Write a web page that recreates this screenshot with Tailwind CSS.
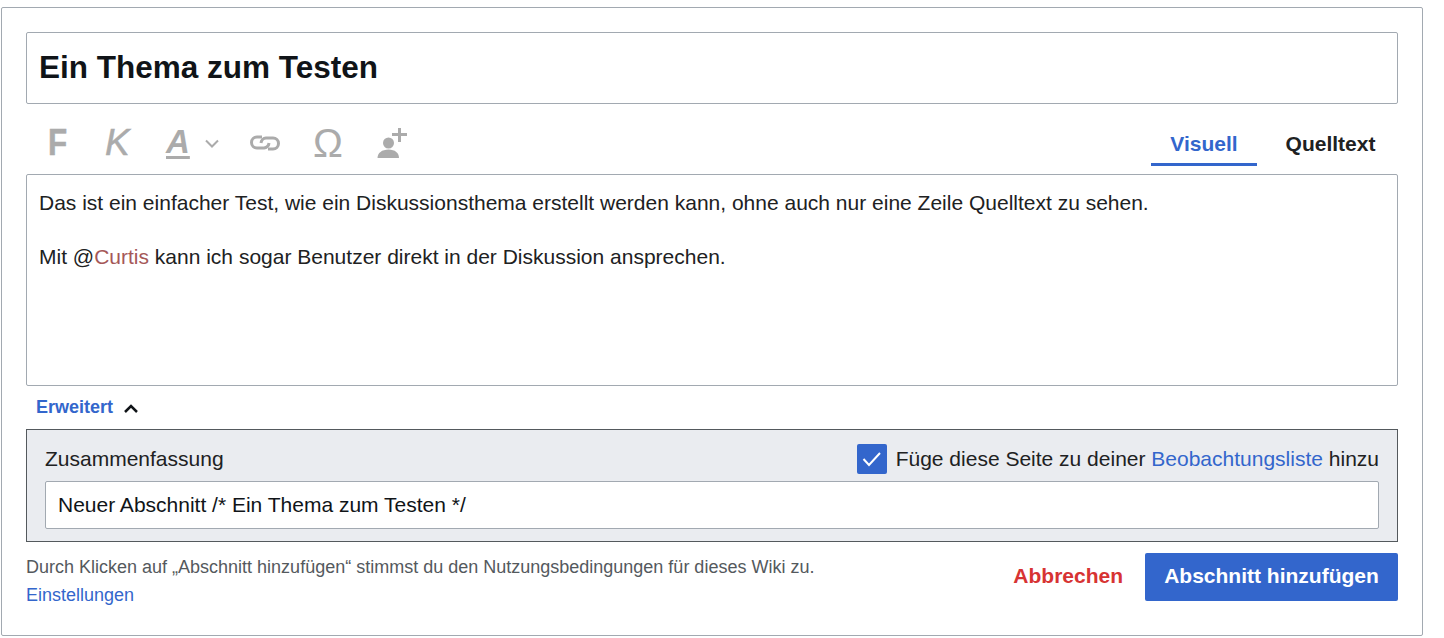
<!DOCTYPE html>
<html lang="de">
<head>
  <meta charset="UTF-8" />
  <title>Abschnitt hinzufügen</title>
  <script src="https://cdn.jsdelivr.net/npm/@tailwindcss/browser@4"></script>
</head>
<body class="bg-white h-screen overflow-hidden font-['Liberation_Sans',Arial,sans-serif] text-[#202122]">

  <!-- Card -->
  <div class="mt-[7px] ml-[1px] w-[1422px] h-[629px] border border-[#a2a9b1] rounded-[2px] px-[24px] pt-[24px] flex flex-col">

    <!-- Title -->
    <div class="h-[72px] shrink-0 border border-[#a2a9b1] rounded-[2px] flex items-center px-[12px] text-[31.5px] font-bold text-[#101418]">Ein Thema zum Testen</div>

    <!-- Toolbar -->
    <div class="h-[70px] shrink-0 flex justify-between">
      <div class="relative flex-1 text-[#ababab]">
        <span class="absolute left-[22px] top-[17px] text-[37px] leading-[44px] font-bold origin-left scale-x-[0.85] [-webkit-text-stroke:0.5px_#ababab]">F</span>
        <span class="absolute left-[79px] top-[17px] text-[37px] leading-[44px] italic font-normal [-webkit-text-stroke:0.5px_#ababab]">K</span>
        <span class="absolute left-[140px] top-[18px] text-[33px] leading-[40px] font-bold italic underline decoration-[3px] underline-offset-[3px]">A</span>
        <svg class="absolute left-[178px] top-[34px]" width="16" height="12" viewBox="0 0 16 12" fill="none" stroke="#ababab" stroke-width="2"><path d="M2 2.500l6 6 6-6"/></svg>
        <svg class="absolute left-[222px] top-[28px]" width="34" height="22" viewBox="0 0 34 22" fill="none" stroke="#ababab" stroke-width="3"><path d="M14 5H9a5.500 5.500 0 0 0 0 11h7a5.500 5.500 0 0 0 5-5"/><path d="M20 17h5a5.500 5.500 0 0 0 0-11h-7a5.500 5.500 0 0 0-5 5"/></svg>
        <span class="absolute left-[287px] top-[15px] text-[40px] leading-[48px]">Ω</span>
        <svg class="absolute left-[349px] top-[23px]" width="34" height="34" viewBox="0 0 34 34" fill="#ababab"><circle cx="13.500" cy="16" r="5.500"/><path d="M2.500 31c0-5 4.500-8.500 11-8.500s10.500 3.500 10.500 8.500z"/><path d="M17 6h6V1h3v5h6v3h-6v6h-3V9h-6z"/></svg>
      </div>
      <div class="flex h-[62px] text-[21px] font-bold">
        <div class="w-[106px] h-full flex items-center justify-center text-[#3366cc] border-b-[3px] border-[#3366cc] pt-[20px]">Visuell</div>
        <div class="w-[141px] h-full flex items-center justify-center pl-[6px] text-[#202122] pt-[21px] pb-[3px]">Quelltext</div>
      </div>
    </div>

    <!-- Editor -->
    <div class="h-[212px] shrink-0 border border-[#a2a9b1] rounded-[2px] px-[12px] pt-[14px] text-[21px] leading-[27px]">
      <p class="mb-[27px]">Das ist ein einfacher Test, wie ein Diskussionsthema erstellt werden kann, ohne auch nur eine Zeile Quelltext zu sehen.</p>
      <p>Mit @<span class="text-[#a55858]">Curtis</span> kann ich sogar Benutzer direkt in der Diskussion ansprechen.</p>
    </div>

    <!-- Advanced toggle -->
    <div class="h-[43px] shrink-0 flex items-center pl-[10px] gap-[10px]">
      <span class="text-[#3366cc] text-[18px] font-bold">Erweitert</span>
      <svg width="16" height="12" viewBox="0 0 16 12" fill="none" stroke="#101418" stroke-width="2.500"><path d="M2 10l6-6 6 6"/></svg>
    </div>

    <!-- Summary -->
    <div class="h-[113px] shrink-0 border border-[#54595d] bg-[#eaecf0] px-[18px] pt-[14px]">
      <div class="h-[30px] flex justify-between items-center text-[21px]">
        <span>Zusammenfassung</span>
        <div class="flex items-center gap-[9px]">
          <div class="w-[30px] h-[30px] rounded-[2px] bg-[#3366cc] flex items-center justify-center">
            <svg width="20" height="16" viewBox="0 0 20 16" fill="none" stroke="#fff" stroke-width="2"><path d="M1.500 8l5.500 6L18 2"/></svg>
          </div>
          <span>Füge diese Seite zu deiner <span class="text-[#3366cc]">Beobachtungsliste</span> hinzu</span>
        </div>
      </div>
      <div class="mt-[7px] h-[48px] bg-white border border-[#a2a9b1] rounded-[2px] flex items-center px-[12px] text-[21px] text-[#101418]">Neuer Abschnitt /* Ein Thema zum Testen */</div>
    </div>

    <!-- Footer -->
    <div class="flex justify-between pt-[11px]">
      <div class="text-[18px] leading-[28px] text-[#54595d]">
        <p>Durch Klicken auf „Abschnitt hinzufügen“ stimmst du den Nutzungsbedingungen für dieses Wiki zu.</p>
        <p class="text-[#3366cc]">Einstellungen</p>
      </div>
      <div class="flex items-start">
        <button class="h-[46px] mr-[22px] text-[21px] font-bold text-[#d73333]">Abbrechen</button>
        <button class="w-[253px] h-[48px] pb-[2px] rounded-[2px] bg-[#3366cc] text-white text-[21px] font-bold">Abschnitt hinzufügen</button>
      </div>
    </div>
  </div>

</body>
</html>
